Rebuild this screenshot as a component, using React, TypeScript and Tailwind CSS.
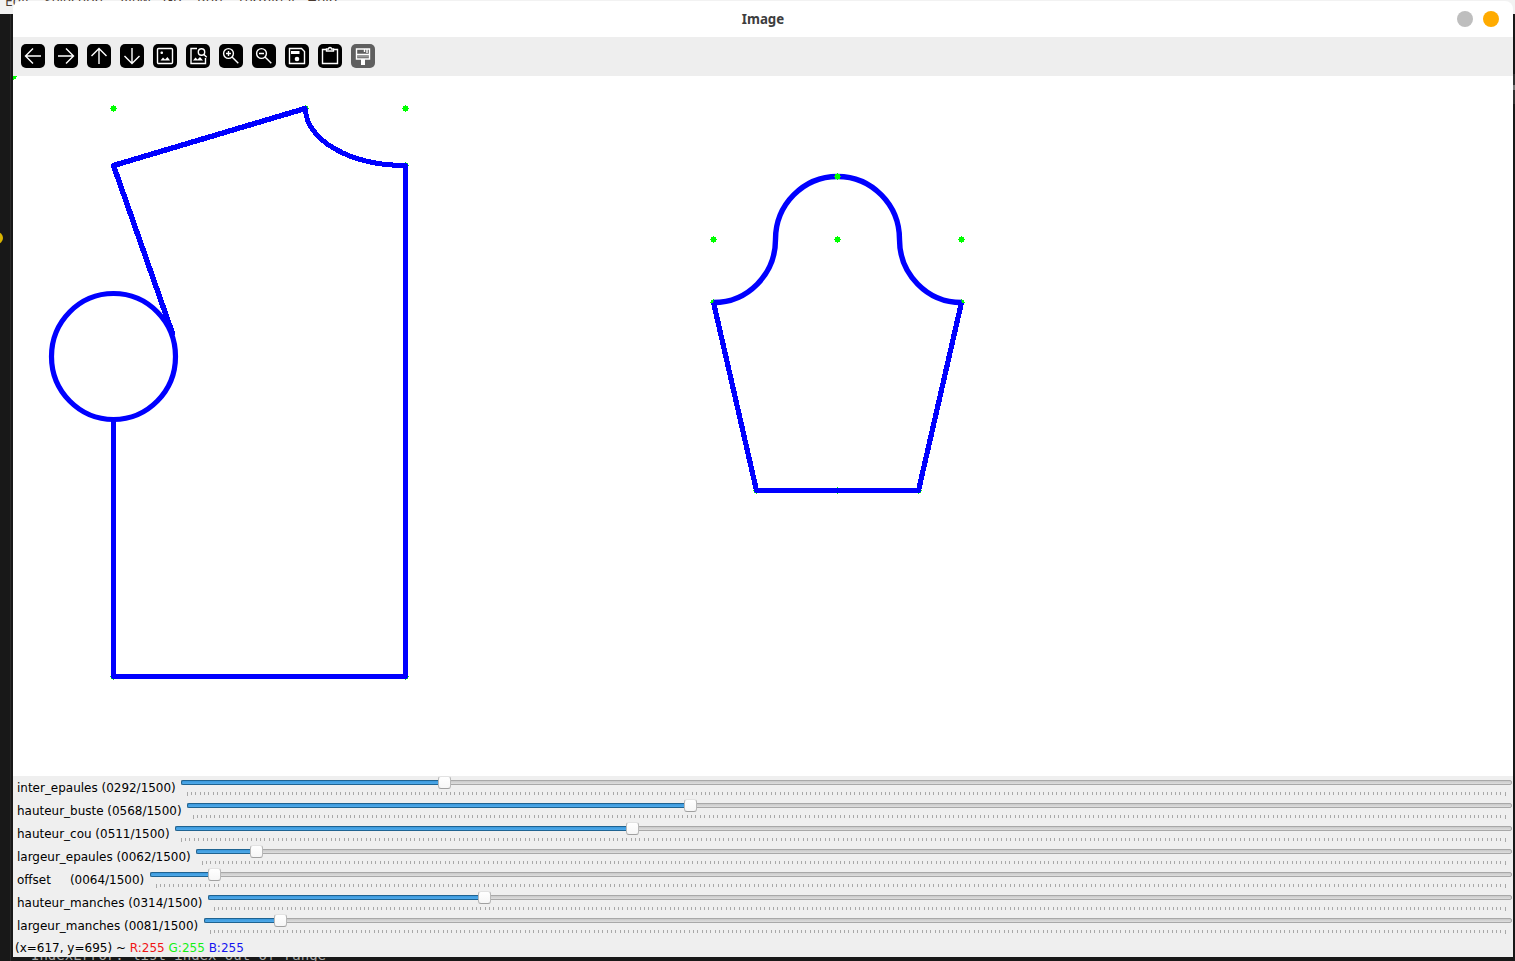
import React from "react";

type Track = { label: string; value: number; start: number };

const TRACK_END = 1512;

const tracks: Track[] = [
  { label: "inter_epaules (0292/1500)", value: 292, start: 181 },
  { label: "hauteur_buste (0568/1500)", value: 568, start: 187 },
  { label: "hauteur_cou (0511/1500)", value: 511, start: 175 },
  { label: "largeur_epaules (0062/1500)", value: 62, start: 196 },
  { label: "offset     (0064/1500)", value: 64, start: 150 },
  { label: "hauteur_manches (0314/1500)", value: 314, start: 208 },
  { label: "largeur_manches (0081/1500)", value: 81, start: 204 },
];

const TICKS = Array.from({ length: 301 }, (_, i) => i);

function Slider({ label, value, start }: Track) {
  const width = TRACK_END - start;
  const span = width - 13;
  const centre = 6.5 + (value / 1500) * span;
  const handle = Math.round(centre - 6.5);
  return (
    <div className="flex h-[23px]">
      <div
        className="shrink-0 whitespace-pre pl-1 pt-[4px] text-[11.98px] leading-[16px] text-black"
        style={{ width: start - 13 }}
      >
        {label}
      </div>
      <div className="relative pt-[4px]" style={{ width }}>
        <div className="h-[5px] rounded-[2px] border border-[#a8a8a8] bg-linear-to-b from-[#c9c9c9] to-[#dedede]" />
        <div
          className="absolute left-0 top-[4px] h-[5px] rounded-l-[2px] border border-r-0 border-[#1f6391] bg-linear-to-b from-[#3b99dc] to-[#50aaea]"
          style={{ width: centre }}
        />
        <svg className="mt-[7px] block h-[4px]" width={width} height="4" shapeRendering="crispEdges" fill="#a8a8a8">
          {TICKS.map((i) => (
            <rect key={i} x={Math.floor(6 + (i * span) / 300)} y="0" width="1" height={i === 0 || i === 300 ? 4 : 3} />
          ))}
        </svg>
        <div
          className="absolute top-0 h-[13px] w-[13px] rounded-[3px] border border-[#b8b8b8] border-t-[#e2e2e2] border-b-[#a0a0a0] bg-linear-to-b from-white to-[#f6f6f6]"
          style={{ left: handle }}
        />
      </div>
    </div>
  );
}

const icons: React.ReactNode[] = [
  <path d="M20 12H5M12 4.5 4.5 12l7.5 7.5" />,
  <path d="M4 12h15M12 4.5l7.500 7.500-7.500 7.500" />,
  <path d="M12 20V5M4.500 12 12 4.500l7.500 7.500" />,
  <path d="M12 4v15M4.500 12l7.500 7.500 7.500-7.500" />,
  <>
    <rect x="4.500" y="4.500" width="15" height="15" rx="1" />
    <path d="M7.500 16.500 10 13.500l2 2 2.500-2.500 2.500 3.500z" fill="#fff" stroke="none" />
    <rect x="7.500" y="7.500" width="2.500" height="2.500" rx="1" fill="#fff" stroke="none" />
  </>,
  <>
    <path d="M11 4.500H5v15h14.500V14" />
    <path d="M7 16.500 9.500 13.500l2 2 2.500-2.500 3 3.500z" fill="#fff" stroke="none" />
    <circle cx="15.500" cy="8" r="3.200" />
    <path d="m17.700 10.200 3 3" />
  </>,
  <>
    <circle cx="9.500" cy="9.500" r="4.900" />
    <path d="m13 13 6.300 6.300M7 9.500h5M9.500 7v5" />
  </>,
  <>
    <circle cx="9.500" cy="9.500" r="4.900" />
    <path d="m13 13 6.300 6.300M7 9.500h5" />
  </>,
  <>
    <path d="M4.500 4.500h12l3 3v12h-15z" />
    <rect x="6" y="7" width="8.500" height="3" fill="#fff" stroke="none" />
    <circle cx="12" cy="15" r="2.300" fill="#fff" stroke="none" />
  </>,
  <>
    <path d="M8.500 5.500h-4v14h15v-14h-4" />
    <path d="M8.500 5v2h7V5h-2c0-2-3-2-3 0z" />
  </>,
  <>
    <path d="M5.500 5h13v10h-13z" />
    <path d="M6 11.500h12v2H6z" fill="#999" stroke="none" />
    <path d="M13.500 5v3M16 5v4M6 10.500h12" />
    <path d="M10 15h4v6h-4z" fill="#fff" stroke="none" />
  </>,
];

function Toolbar() {
  return (
    <div className="flex h-[39px] items-start gap-[9px] bg-[#eeeeee] pl-2 pt-[7px]">
      {icons.map((icon, i) => (
        <button
          key={i}
          className={`size-6 rounded-[5px] ${i === icons.length - 1 ? "bg-[#5f5f5f]" : "bg-black"}`}
        >
          <svg viewBox="0 0 24 24" width="24" height="24" fill="none" stroke="#fff" strokeWidth="1.4">
            {icon}
          </svg>
        </button>
      ))}
    </div>
  );
}

const dots: [number, number][] = [
  [13, 76], [113, 108], [305, 108], [405, 108], [405, 165], [113, 676], [405, 676],
  [713, 239], [837, 239], [961, 239], [713, 302], [961, 302], [756, 490], [837, 490], [918, 490],
];

function Dot({ x, y }: { x: number; y: number }) {
  return <path d={`M${x} ${y - 3}h1v1h2v2h1v1h-1v2h-2v1h-1v-1h-2v-2h-1v-1h1v-2h2z`} fill="#0f0" shapeRendering="crispEdges" />;
}

function Pattern() {
  return (
    <svg className="block" width="1500" height="700" viewBox="13 76 1500 700">
      {dots.map(([x, y]) => (
        <Dot key={`${x}-${y}`} x={x} y={y} />
      ))}
      <g fill="none" stroke="#00f" strokeWidth="5">
        <g shapeRendering="crispEdges" strokeLinecap="round" strokeLinejoin="round">
          <path d="M172.500 333.500 113.500 165.500 305 108.500" strokeWidth="5.400" />
          <path d="M305.500 109A100 57 0 0 0 405.500 165.500V676.500H113.500V420" />
          <path d="M756.500 490.500H918.500" />
          <path d="M713.500 302.500 756.500 490.500M918.500 490.500 961.500 302.500" strokeLinecap="butt" strokeWidth="5.200" />
        </g>
        <ellipse cx="113.500" cy="356.500" rx="62" ry="63" strokeWidth="5.200" />
        <path
          d="M713.500 302.500A62 63 0 0 0 775.500 239.500A62 63 0 0 1 899.500 239.500A62 63 0 0 0 961.500 302.500"
          strokeWidth="5.400"
        />
      </g>
      <path d="M307 106h1v2h-1z" fill="#0f0" shapeRendering="crispEdges" />
      <Dot x={837} y={176} />
    </svg>
  );
}

export default function App() {
  return (
    <div className="relative h-[961px] w-[1515px] overflow-hidden bg-[#181818] pl-[13px] pt-px font-['DejaVu_Sans',sans-serif]">
      <div className="absolute left-0 top-0 h-[14px] w-full overflow-hidden bg-[#f2f2f2]">
        <div className="absolute -top-[9px] left-[5px] flex gap-[14px] font-['Open_Sans',sans-serif] text-[14px] leading-[20px] text-[#4a3a30]">
          <span className="w-[25px]">Edit</span>
          <span className="w-[62px]">Selection</span>
          <span className="w-[29px]">View</span>
          <span className="w-[20px]">Go</span>
          <span className="w-[26px]">Run</span>
          <span className="w-[56px]">Terminal</span>
          <span>Help</span>
        </div>
      </div>
      <div className="absolute left-[10px] top-[14px] h-[947px] w-px bg-[#2b2b2b]" />
      <div className="absolute -left-[9px] top-[232px] size-3 rounded-full bg-[#d9b400]" />
      <div className="absolute left-[1513px] top-[74px] h-[30px] w-[2px] bg-[#303030]" />
      <div className="absolute left-[1513px] top-[85px] h-[5px] w-[2px] bg-[#777777]" />
      <div className="absolute left-[31px] top-[945px] whitespace-pre font-['DejaVu_Sans_Mono',monospace] text-[14px] leading-[20px] text-[#aaaaaa]">
        IndexError: list index out of range
      </div>

      <main className="relative flex h-[956px] w-[1500px] flex-col overflow-hidden rounded-t-[8px] bg-white">
        <header className="grid h-9 grid-cols-[1fr_auto_1fr] items-center">
          <span />
          <h1 className="font-['Noto_Sans',sans-serif] text-[13.3px] leading-[20px] font-bold text-[#3d3d3d]">Image</h1>
          <div className="flex justify-end gap-[10px] pr-[14px]">
            <span className="size-4 rounded-full bg-[#bebebe]" />
            <span className="size-4 rounded-full bg-[#ffab00]" />
          </div>
        </header>
        <Toolbar />
        <Pattern />
        <section className="h-[181px] bg-[#efefef]">
          {tracks.map((t) => (
            <Slider key={t.label} {...t} />
          ))}
          <div className="whitespace-pre pl-[2px] pt-[3px] text-[12px] leading-[16px] text-black">
            (x=617, y=695) ~ <span className="text-[#f01414]">R:255</span> <span className="text-[#14f014]">G:255</span>{" "}
            <span className="text-[#1414f0]">B:255</span>
          </div>
        </section>
      </main>
    </div>
  );
}
